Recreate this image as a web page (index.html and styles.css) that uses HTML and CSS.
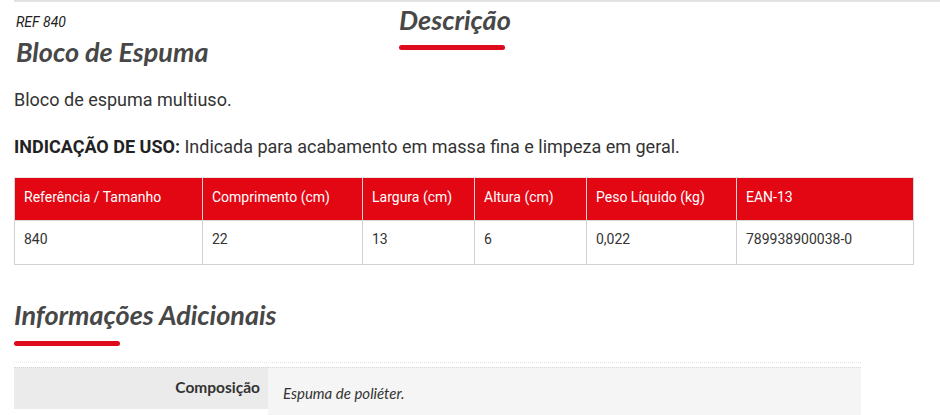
FILE: index.html
```html
<!DOCTYPE html>
<html lang="pt-BR">
<head>
<meta charset="utf-8">
<title>Bloco de Espuma</title>
<link rel="stylesheet" href="styles.css">
</head>
<body>
<div class="page">
  <div class="top">
    <div class="product">
      <div class="ref">REF 840</div>
      <h1 class="title">Bloco de Espuma</h1>
    </div>
    <div class="tab">
      <h2 class="heading">Descrição</h2>
      <span class="bar"></span>
    </div>
  </div>
  <p class="text">Bloco de espuma multiuso.</p>
  <p class="text"><strong>INDICAÇÃO DE USO:</strong> Indicada para acabamento em massa fina e limpeza em geral.</p>
  <table class="specs">
    <colgroup>
      <col class="c1"><col class="c2"><col class="c3"><col class="c4"><col class="c5"><col class="c6">
    </colgroup>
    <thead>
      <tr>
        <th>Referência / Tamanho</th>
        <th>Comprimento (cm)</th>
        <th>Largura (cm)</th>
        <th>Altura (cm)</th>
        <th>Peso Líquido (kg)</th>
        <th>EAN-13</th>
      </tr>
    </thead>
    <tbody>
      <tr>
        <td>840</td>
        <td>22</td>
        <td>13</td>
        <td>6</td>
        <td>0,022</td>
        <td>789938900038-0</td>
      </tr>
    </tbody>
  </table>
  <div class="info-head">
    <h2 class="heading">Informações Adicionais</h2>
    <span class="bar"></span>
  </div>
  <div class="info">
    <div class="info-label">Composição</div>
    <div class="info-value">Espuma de poliéter.</div>
  </div>
</div>
</body>
</html>
```

FILE: styles.css
```css
html, body {
  margin: 0;
  padding: 0;
  background: #fff;
}
body {
  font-family: Roboto, "Liberation Sans", sans-serif;
  color: #333;
  overflow: hidden;
}
.page {
  margin-left: 14px;
  border-top: 2px solid #e2e2e2;
}
.top {
  display: flex;
}
.product {
  width: 385px;
  padding-left: 2px;
  box-sizing: border-box;
}
.ref {
  font-family: Roboto, sans-serif;
  font-style: italic;
  font-size: 14px;
  line-height: 16px;
  color: #222;
  margin-top: 12px;
}
.title, .heading {
  font-family: Lato, "Open Sans", sans-serif;
  font-style: italic;
  font-weight: 700;
  color: #474747;
  margin: 0;
}
.title {
  font-size: 27px;
  line-height: 32px;
  margin-top: 6px;
}
.tab {
  display: flex;
  flex-direction: column;
  align-items: flex-start;
}
.heading {
  font-size: 27px;
  line-height: 32px;
}
.tab .heading {
  margin-top: 2px;
}
.bar {
  display: block;
  width: 106px;
  height: 5px;
  border-radius: 3px;
  background: #de0b1c;
  margin-top: 9px;
}
.text {
  font-size: 18px;
  line-height: 27px;
  margin: 18px 0 0;
}
.text + .text {
  margin-top: 20px;
}
.text strong {
  font-weight: 700;
  color: #222;
}
.specs {
  margin-top: 17px;
  border-collapse: collapse;
  width: 899px;
  table-layout: fixed;
  font-size: 14px;
  line-height: 17px;
}
.c1 { width: 188px; }
.c2 { width: 160px; }
.c3 { width: 112px; }
.c4 { width: 112px; }
.c5 { width: 150px; }
.c6 { width: 177px; }
.specs th {
  background: #e30613;
  color: #fff;
  font-weight: 400;
  text-align: left;
  vertical-align: top;
  height: 43px;
  padding: 11px 9px 0;
  border: 1px solid #d7d7d7;
  border-top: 1px solid #e8e8e8;
  box-sizing: border-box;
}
.specs td {
  height: 44px;
  vertical-align: top;
  padding: 10px 9px 0;
  border: 1px solid #d2d2d2;
  color: #333;
  box-sizing: border-box;
}
.info-head {
  margin-top: 34px;
}
.info-head .bar {
  margin-top: 10px;
}
.info {
  margin-top: 16px;
  width: 847px;
  border-top: 1px dotted #e6e6e6;
  padding-top: 4px;
  display: grid;
  grid-template-columns: 254px 1fr;
  align-items: start;
}
.info-label,
.info-value {
  border-top: 1px dotted #d8d8d8;
  box-sizing: border-box;
  color: #333;
  font-family: Lato, "Open Sans", sans-serif;
  line-height: 18px;
}
.info-label {
  background: #ebebeb;
  height: 42px;
  text-align: right;
  padding: 10px 8px 0 0;
  font-weight: 700;
  font-size: 15.5px;
}
.info-value {
  background: #f5f5f5;
  height: 60px;
  padding: 16px 0 0 15px;
  font-style: italic;
  font-size: 15px;
}
```
